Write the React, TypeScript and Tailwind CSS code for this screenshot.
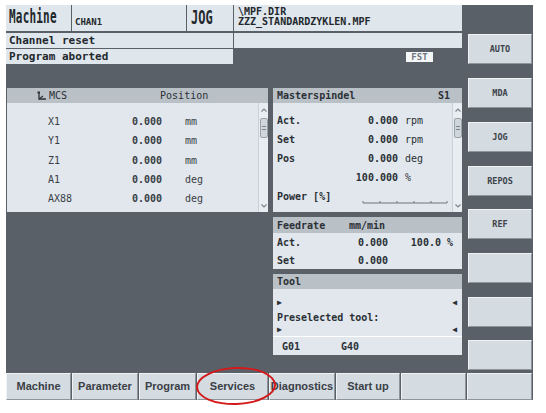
import React from "react";

const mono = "font-['DejaVu_Sans_Mono','Liberation_Mono',monospace]";
const sans = "font-['Liberation_Sans','DejaVu_Sans',sans-serif]";

function ScrollBar() {
  return (
    <div className="w-[10px] h-full flex flex-col items-center bg-[#e8edf1] border-l border-[#c9d0d6]">
      <svg width="8" height="8" viewBox="0 0 8 8" className="mt-[3px]">
        <path d="M1.5 5.5 L4 3 L6.5 5.5" stroke="#7d858c" strokeWidth="1.2" fill="none" />
      </svg>
      <div className="mt-[4px] w-[8px] h-[20px] rounded-[2px] bg-[#cfd6dc] border border-[#9aa2a9] flex flex-col items-center justify-center gap-[2px]">
        <div className="w-[4px] h-[1px] bg-[#7d858c]" />
        <div className="w-[4px] h-[1px] bg-[#7d858c]" />
      </div>
      <div className="flex-1" />
      <svg width="8" height="8" viewBox="0 0 8 8" className="mb-[2px]">
        <path d="M1.5 2.5 L4 5 L6.5 2.5" stroke="#7d858c" strokeWidth="1.2" fill="none" />
      </svg>
    </div>
  );
}

function SoftKey({ label, className = "" }: { label?: string; className?: string }) {
  return (
    <div
      className={`h-[30px] w-[64px] bg-[#d4dbe1] border border-t-[#f0f3f6] border-l-[#f0f3f6] border-b-[#8d949a] border-r-[#8d949a] flex items-center justify-center text-[8.5px] font-bold text-[#3d434a] ${mono} ${className}`}
    >
      {label}
    </div>
  );
}

function BottomKey({ label, w }: { label?: string; w: string }) {
  return (
    <div
      className={`${w} h-full bg-[#d4dbe1] border border-t-[#f0f3f6] border-l-[#f0f3f6] border-b-[#8d949a] border-r-[#8d949a] flex items-center justify-center text-[11px] font-bold text-[#3a4046] ${sans}`}
    >
      {label}
    </div>
  );
}

const axes = [
  { n: "X1", v: "0.000", u: "mm" },
  { n: "Y1", v: "0.000", u: "mm" },
  { n: "Z1", v: "0.000", u: "mm" },
  { n: "A1", v: "0.000", u: "deg" },
  { n: "AX88", v: "0.000", u: "deg" },
];

export default function App() {
  return (
    <div className="relative w-[546px] h-[413px] bg-white pt-[5px] pl-[6px]">
      <div className="w-[527px] h-[395px] bg-[#5a6068] flex flex-col">
        {/* top area */}
        <div className="h-[368px] flex">
          {/* main */}
          <div className="w-[456px] flex flex-col">
            {/* header row */}
            <div className={`h-[26px] flex gap-[1px] text-[#23282d] ${mono}`}>
              <div className="w-[65px] bg-[#dfe6ec] flex items-center pl-[3px]">
                <span className="inline-block text-[11px] font-bold scale-y-[1.8] origin-left tracking-[0.2px]">Machine</span>
              </div>
              <div className="w-[114px] bg-[#dfe6ec] flex items-end pl-[3px] pb-[4px]">
                <span className="text-[9px] font-bold leading-none">CHAN1</span>
              </div>
              <div className="w-[46px] bg-[#dfe6ec] flex items-center pl-[4px]">
                <span className="inline-block text-[12px] font-bold scale-y-[1.6] origin-left">JOG</span>
              </div>
              <div className="w-[228px] bg-[#dfe6ec] pl-[4px] pt-[2px] text-[10px] font-bold leading-[10px]">
                <div>\MPF.DIR</div>
                <div>ZZZ_STANDARDZYKLEN.MPF</div>
              </div>
            </div>
            {/* status rows */}
            <div className={`mt-[2px] flex text-[11px] font-bold text-[#23282d] ${mono}`}>
              <div className="w-[227px] flex flex-col gap-[1px]">
                <div className="h-[15px] bg-[#dfe6ec] pl-[3px] leading-[15px]">Channel reset</div>
                <div className="h-[15px] bg-[#dfe6ec] pl-[3px] leading-[15px]">Program aborted</div>
              </div>
              <div className="ml-[1px] w-[228px] flex flex-col gap-[1px]">
                <div className="h-[15px] bg-[#dfe6ec]" />
                <div className="h-[15px] pl-[172px] pt-[3px]">
                  <div className="w-[27px] h-[10px] bg-[#f4f6f8] text-[#6f777e] text-[9px] leading-[10px] text-center">FST</div>
                </div>
              </div>
            </div>
            {/* panels */}
            <div className={`mt-[24px] flex ${mono}`}>
              {/* MCS panel */}
              <div className="ml-[1px] w-[261px] h-[124px] bg-[#e1e7ec] flex flex-col">
                <div className="h-[15px] bg-[#b9c0c6] flex items-center text-[10px] text-[#2b3036]">
                  <svg width="10" height="10" viewBox="0 0 10 10" className="ml-[30px]">
                    <path d="M2 1 V8 H9" stroke="#2b3036" strokeWidth="1.3" fill="none" />
                    <path d="M2 8 L6 5" stroke="#2b3036" strokeWidth="1.1" fill="none" />
                    <rect x="0.5" y="0.5" width="2.5" height="2" fill="#2b3036" />
                  </svg>
                  <span className="ml-[2px]">MCS</span>
                  <span className="ml-[93px]">Position</span>
                </div>
                <div className="flex-1 flex">
                  <div className="flex-1 pt-[9px] text-[10px] text-[#3a4047]">
                    {axes.map((a) => (
                      <div key={a.n} className="h-[19.3px] flex items-center">
                        <span className="ml-[41px] w-[74px] text-[#3a4047]">{a.n}</span>
                        <span className="w-[40px] text-right font-bold text-[#3a4047]">{a.v}</span>
                        <span className="ml-[23px] text-[#3a4047]">{a.u}</span>
                      </div>
                    ))}
                  </div>
                  <ScrollBar />
                </div>
              </div>
              {/* right stack */}
              <div className="ml-[5px] w-[189px] flex flex-col text-[10px] text-[#2b3036]">
                {/* spindle */}
                <div className="h-[124px] bg-[#e1e7ec] flex flex-col">
                  <div className="h-[15px] bg-[#b9c0c6] flex items-center justify-between pl-[4px] pr-[12px] font-bold">
                    <span>Masterspindel</span>
                    <span>S1</span>
                  </div>
                  <div className="flex-1 flex">
                    <div className="flex-1 pt-[8px]">
                      {[
                        ["Act.", "0.000", "rpm"],
                        ["Set", "0.000", "rpm"],
                        ["Pos", "0.000", "deg"],
                        ["", "100.000", "%"],
                      ].map(([l, v, u], i) => (
                        <div key={i} className="h-[19px] flex items-center">
                          <span className="pl-[4px] w-[80px] font-bold">{l}</span>
                          <span className="w-[45px] text-right font-bold">{v}</span>
                          <span className="ml-[7px]">{u}</span>
                        </div>
                      ))}
                      <div className="h-[19px] flex items-center">
                        <span className="pl-[4px] w-[89px] font-bold">Power [%]</span>
                        <svg width="86" height="8" viewBox="0 0 86 8" className="mt-[8px]">
                          <path d="M1 6 H85" stroke="#6d757c" strokeWidth="1" />
                          <path d="M1 4 V6 M18 4 V6 M35 4 V6 M52 4 V6 M69 4 V6 M85 4 V6" stroke="#6d757c" strokeWidth="1" />
                        </svg>
                      </div>
                    </div>
                    <ScrollBar />
                  </div>
                </div>
                {/* feedrate */}
                <div className="mt-[5px] h-[52px] bg-[#e1e7ec] flex flex-col">
                  <div className="h-[16px] bg-[#b9c0c6] flex items-center pl-[4px] font-bold">
                    <span className="w-[72px]">Feedrate</span>
                    <span>mm/min</span>
                  </div>
                  <div className="h-[18px] flex items-center font-bold">
                    <span className="pl-[4px] w-[80px]">Act.</span>
                    <span className="w-[35px] text-right">0.000</span>
                    <span className="w-[65px] text-right">100.0 %</span>
                  </div>
                  <div className="h-[18px] flex items-center font-bold">
                    <span className="pl-[4px] w-[80px]">Set</span>
                    <span className="w-[35px] text-right">0.000</span>
                  </div>
                </div>
                {/* tool */}
                <div className="mt-[5px] h-[81px] bg-[#e1e7ec] flex flex-col font-bold">
                  <div className="h-[15px] bg-[#b9c0c6] flex items-center pl-[4px]">Tool</div>
                  <div className="h-[21px] flex items-end justify-between pl-[4px] pr-[5px] pb-[1px] text-[8px]">
                    <span>▶</span>
                    <span>◀</span>
                  </div>
                  <div className="h-[14px] flex items-center pl-[4px]">Preselected tool:</div>
                  <div className="h-[12px] flex items-start justify-between pl-[4px] pr-[5px] text-[8px]">
                    <span>▶</span>
                    <span>◀</span>
                  </div>
                  <div className="h-[1px] bg-[#a9b0b6] border-b border-white" />
                  <div className="flex-1 flex items-center">
                    <span className="ml-[9px] w-[59px]">G01</span>
                    <span>G40</span>
                  </div>
                </div>
              </div>
            </div>
          </div>
          {/* right soft keys */}
          <div className="w-[71px] pl-[6px] pt-[29px] flex flex-col">
            <SoftKey label="AUTO" />
            <SoftKey label="MDA" className="mt-[14px]" />
            <SoftKey label="JOG" className="mt-[14px]" />
            <SoftKey label="REPOS" className="mt-[14px]" />
            <SoftKey label="REF" className="mt-[13px]" />
            <SoftKey className="mt-[14px]" />
            <SoftKey className="mt-[14px]" />
            <SoftKey className="mt-[13px]" />
          </div>
        </div>
        {/* bottom soft keys */}
        <div className="h-[27px] flex gap-[1px]">
          <BottomKey label="Machine" w="w-[65px]" />
          <BottomKey label="Parameter" w="w-[66px]" />
          <BottomKey label="Program" w="w-[57px]" />
          <BottomKey label="Services" w="w-[71px]" />
          <BottomKey label="Diagnostics" w="w-[66px]" />
          <BottomKey label="Start up" w="w-[64px]" />
          <BottomKey w="w-[65px]" />
          <BottomKey w="w-[65px]" />
        </div>
      </div>
      {/* red highlight ellipse */}
      <div className="absolute left-[196px] top-[367px] w-[80px] h-[38px] rounded-[50%] border-[2.5px] border-[#d41a1a] -rotate-2" />
    </div>
  );
}
